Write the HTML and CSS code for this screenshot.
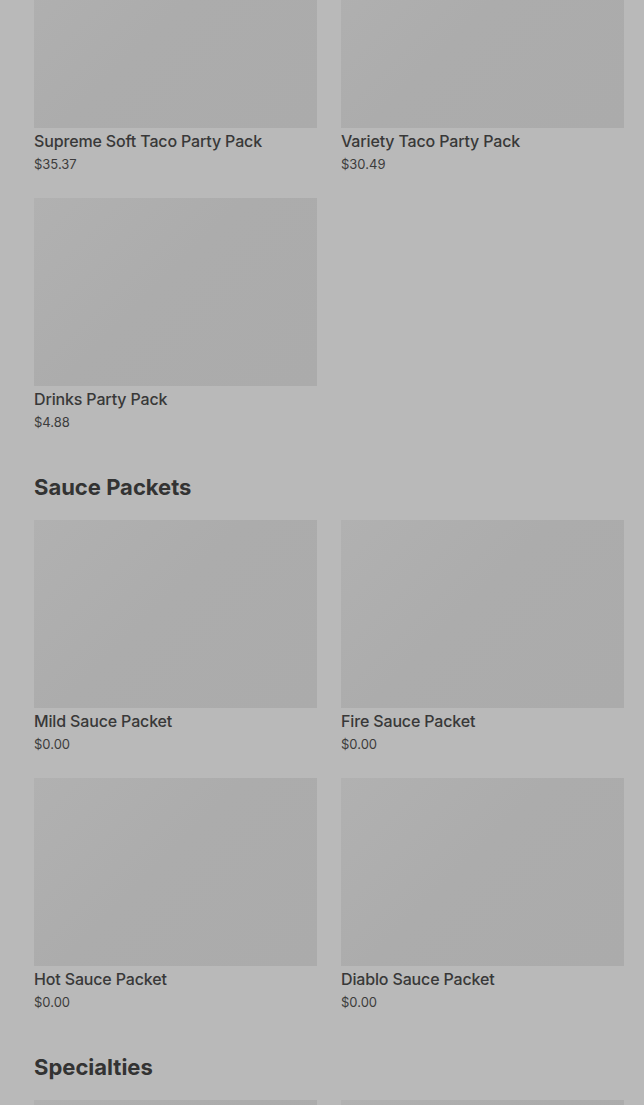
FILE: index.html
```html
<!DOCTYPE html>
<html lang="en">
<head>
  <meta charset="UTF-8" />
  <title>Menu</title>
  <link rel="stylesheet" href="styles.css">
</head>
<body>
  <div id="menu">
    <section class="section first">
      <div class="grid">
        <div class="card">
          <div class="thumb"></div>
          <div class="name">Supreme Soft Taco Party Pack</div>
          <div class="price">$35.37</div>
        </div>
        <div class="card">
          <div class="thumb"></div>
          <div class="name">Variety Taco Party Pack</div>
          <div class="price">$30.49</div>
        </div>
        <div class="card">
          <div class="thumb"></div>
          <div class="name">Drinks Party Pack</div>
          <div class="price">$4.88</div>
        </div>
      </div>
    </section>

    <section class="section">
      <h2>Sauce Packets</h2>
      <div class="grid">
        <div class="card">
          <div class="thumb"></div>
          <div class="name">Mild Sauce Packet</div>
          <div class="price">$0.00</div>
        </div>
        <div class="card">
          <div class="thumb"></div>
          <div class="name">Fire Sauce Packet</div>
          <div class="price">$0.00</div>
        </div>
        <div class="card">
          <div class="thumb"></div>
          <div class="name">Hot Sauce Packet</div>
          <div class="price">$0.00</div>
        </div>
        <div class="card">
          <div class="thumb"></div>
          <div class="name">Diablo Sauce Packet</div>
          <div class="price">$0.00</div>
        </div>
      </div>
    </section>

    <section class="section">
      <h2>Specialties</h2>
      <div class="grid">
        <div class="card">
          <div class="thumb"></div>
        </div>
        <div class="card">
          <div class="thumb"></div>
        </div>
      </div>
    </section>
  </div>
</body>
</html>
```

FILE: styles.css
```css
html, body {
  margin: 0;
  background: #b9b9b9;
  overflow: hidden;
}
body {
  font-family: Inter, "Noto Sans", sans-serif;
  color: #333333;
}
#menu {
  padding: 0 20px 0 34px;
  margin-top: -60px;
}
.section {
  margin-top: 37px;
}
.section.first {
  margin-top: 0;
}
h2 {
  margin: 0 0 17px;
  font-size: 22px;
  line-height: 32px;
  font-weight: 700;
  color: #333333;
}
.grid {
  display: grid;
  grid-template-columns: 1fr 1fr;
  column-gap: 24px;
  row-gap: 22px;
}
.card {
  min-width: 0;
}
.thumb {
  height: 188px;
  background: linear-gradient(135deg, #b1b1b1 0%, #acacac 45%, #ababab 100%);
}
.name {
  margin-top: 2px;
  font-size: 16px;
  line-height: 22px;
  font-weight: 500;
  letter-spacing: -0.15px;
  color: #383838;
}
.price {
  font-size: 13px;
  line-height: 24px;
  color: #3c3c3c;
}
```
